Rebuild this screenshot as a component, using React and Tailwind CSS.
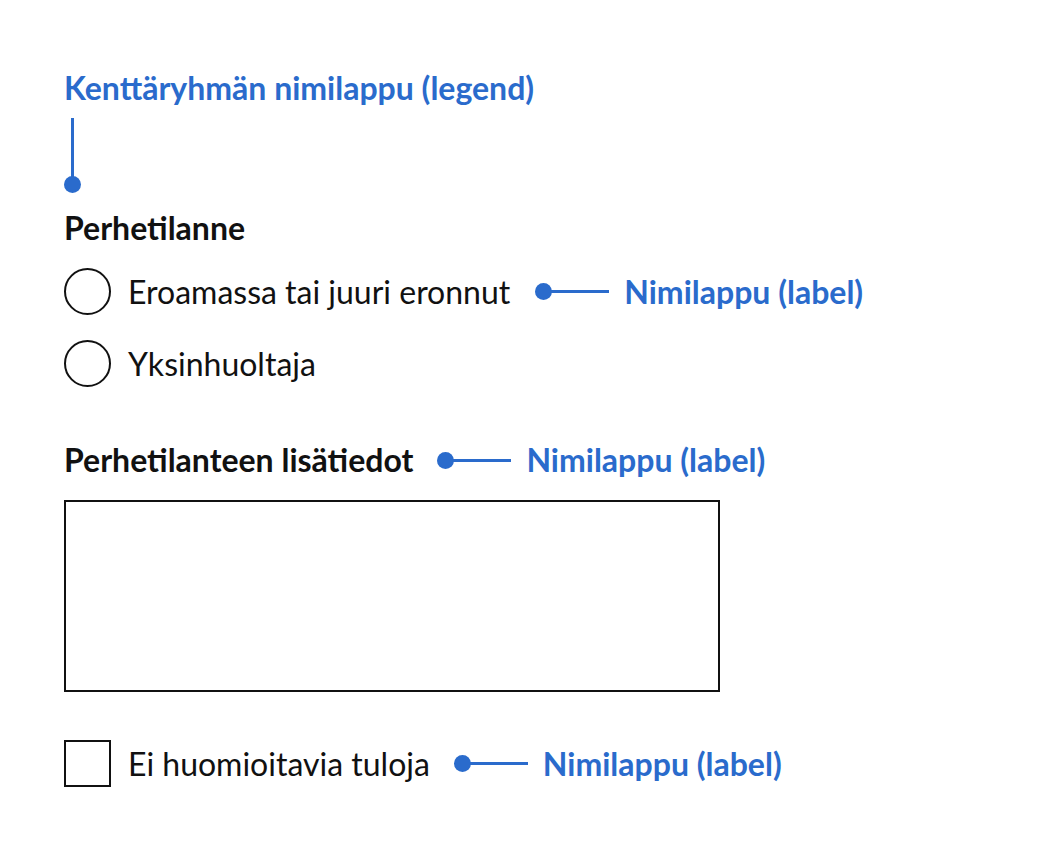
const Connector = () => (
  <div className="flex items-center">
    <div className="h-[17px] w-[17px] rounded-full bg-[#2a6bcc]" />
    <div className="-ml-[2px] h-[3px] w-[59px] bg-[#2a6bcc]" />
  </div>
)

const Annot = ({ children }) => (
  <span className="text-[32px] font-bold text-[#2a6bcc]">{children}</span>
)

const Radio = ({ label, note }) => (
  <div className="flex h-[47px] items-center">
    <div className="h-[47px] w-[47px] shrink-0 rounded-full border-2 border-[#111]" />
    <span className="ml-[17px] text-[32px] text-[#111]">{label}</span>
    {note && (
      <div className="ml-[25px] flex items-center gap-[15px]">
        <Connector />
        <Annot>{note}</Annot>
      </div>
    )}
  </div>
)

export default function App() {
  return (
    <div
      className="min-h-[852px] w-[1050px] bg-white pl-[64px] pt-[69px] leading-[38px]"
      style={{ fontFamily: 'Lato, "Noto Sans", sans-serif' }}
    >
      <div className="text-[32px] font-bold text-[#2a6bcc]">Kenttäryhmän nimilappu (legend)</div>
      <div className="mt-[11px] flex w-[17px] flex-col items-center">
        <div className="h-[60px] w-[3px] bg-[#2a6bcc]" />
        <div className="-mt-[2px] h-[17px] w-[17px] rounded-full bg-[#2a6bcc]" />
      </div>

      <div className="mt-[16px] text-[32px] font-bold text-[#111]">Perhetilanne</div>

      <div className="mt-[21px] flex flex-col gap-[25px]">
        <Radio label="Eroamassa tai juuri eronnut" note="Nimilappu (label)" />
        <Radio label="Yksinhuoltaja" />
      </div>

      <div className="mt-[54px] flex items-center">
        <span className="text-[32px] font-bold text-[#111]">Perhetilanteen lisätiedot</span>
        <div className="ml-[24px] flex items-center gap-[15px]">
          <Connector />
          <Annot>Nimilappu (label)</Annot>
        </div>
      </div>

      <textarea className="mt-[21px] block h-[192px] w-[656px] resize-none border-2 border-[#111] outline-none" />

      <div className="mt-[48px] flex h-[47px] items-center">
        <div className="h-[47px] w-[47px] shrink-0 border-2 border-[#111]" />
        <span className="ml-[17px] text-[32px] text-[#111]">Ei huomioitavia tuloja</span>
        <div className="ml-[24px] flex items-center gap-[15px]">
          <Connector />
          <Annot>Nimilappu (label)</Annot>
        </div>
      </div>
    </div>
  )
}
